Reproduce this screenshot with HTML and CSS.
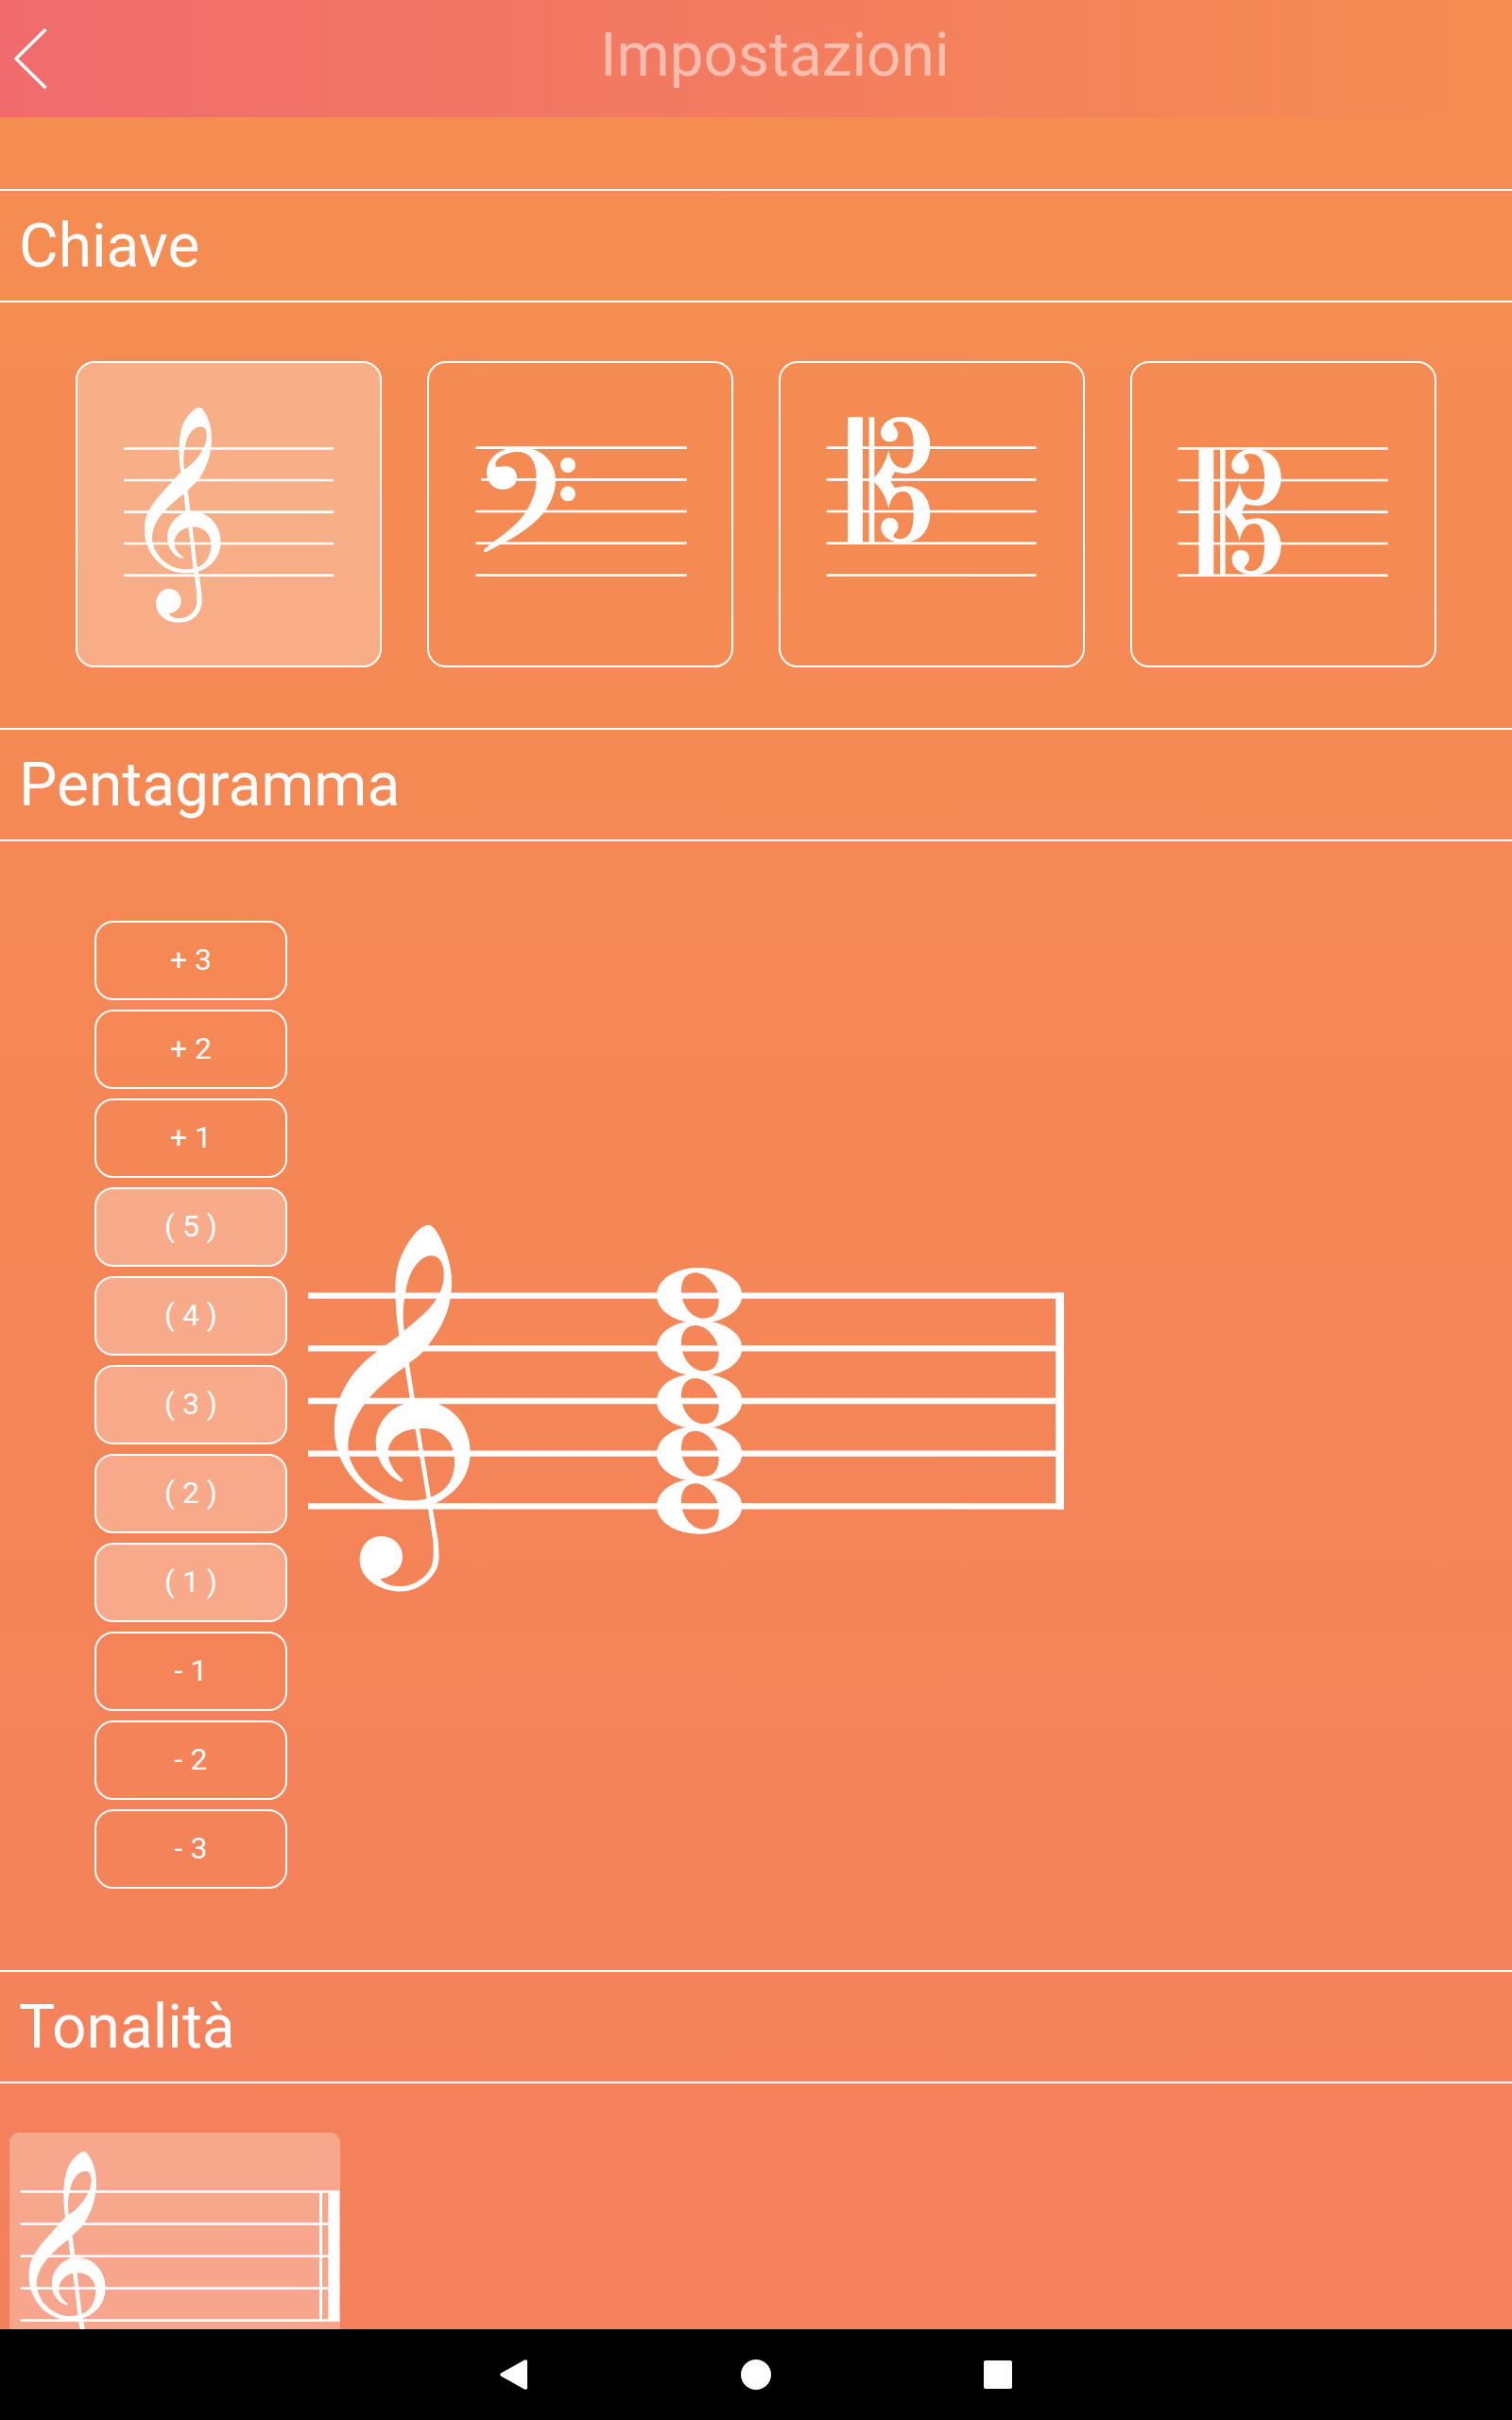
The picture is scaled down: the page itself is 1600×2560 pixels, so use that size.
FILE: index.html
```html
<!DOCTYPE html>
<html lang="it">

<head>
    <title>Impostazioni</title>
    <meta charset="UTF-8">
    <meta name="viewport" content="width=device-width, initial-scale=1">
    <link rel="stylesheet" href="styles.css">
</head>

<body>
    <!-- shared music glyphs -->
    <svg class="defs" width="0" height="0">
        <symbol id="treble" viewBox="101 48 432 1163" preserveAspectRatio="none">
            <path fill-rule="evenodd" d="M307,398 C299,350 295,300 295,250 C295,200 303,165 322,128 C345,85 375,48 400,48 C415,48 425,65 438,90 C460,135 474,180 474,230 C474,310 445,370 400,428 C385,450 365,468 338,486 L322,500 C285,525 245,560 212,596 C170,650 145,700 145,750 C145,790 165,830 200,865 C245,905 290,922 340,922 C370,922 395,918 415,908 C455,890 482,860 483,800 C483,735 445,693 385,693 C315,692 272,725 272,770 C272,800 290,830 320,856 L314,863 C270,845 233,795 233,738 C233,670 290,606 375,606 C470,606 533,680 533,770 C533,850 480,905 415,934 C390,942 365,945 342,944 C315,944 290,942 265,932 C180,890 101,810 101,690 C101,600 150,520 210,470 C240,445 270,425 307,398 Z M323,383 C317,335 320,295 328,262 C335,200 370,145 410,145 C435,145 449,170 449,205 C449,280 390,330 323,383 Z"/>
            <path d="M324,490 L338,484 L356,596 L372,693 L408,912 L414,950 L430,1045 C434,1085 436,1110 428,1135 C405,1185 355,1211 310,1211 C245,1208 183,1170 182,1112 C182,1065 212,1035 250,1035 C290,1035 318,1065 318,1100 C318,1140 285,1165 247,1170 C260,1187 280,1194 310,1194 C355,1194 395,1165 410,1130 C418,1105 416,1080 415,1050 L399,950 L394,912 L358,693 L341,596 Z"/>
        </symbol>
        <!-- heavier cut of the treble clef for small sizes -->
        <symbol id="treble-small" viewBox="248 183 243 683" preserveAspectRatio="none">
            <path fill-rule="evenodd" d="M364,388 C359,355 358,330 359,300 C361,260 370,228 388,208 C403,190 416,183 424,183 C432,183 440,198 448,213 C458,233 462,258 462,285 C461,330 448,370 423,408 C413,422 400,432 386,446 L373,458 C350,474 330,492 315,509 C290,535 272,565 273,600 C275,625 288,652 312,672 C334,689 357,697 380,697 C398,697 412,692 424,687 C446,675 459,650 460,620 C460,585 438,562 402,562 C368,563 345,585 343,612 C343,628 352,645 371,657 L371,663 C343,658 321,630 321,596 C321,555 355,514 400,514 C455,514 491,560 491,608 C491,655 460,690 421,703 C408,708 395,709 378,709 C350,709 325,700 305,685 C270,660 248,615 248,568 C248,525 270,492 300,458 C325,432 345,408 364,388 Z M375,380 C371,350 372,325 378,310 C382,270 405,244 427,244 C440,244 446,255 446,272 C446,315 405,362 375,380 Z"/>
            <path d="M373,455 L386,446 L395,514 L401,562 L416,690 L422,716 C428,750 431,775 431,800 C428,840 400,866 357,866 C318,866 286,840 285,806 C285,780 303,758 326,758 C350,758 366,778 365,801 C363,820 348,835 326,837 C333,848 345,852 357,852 C390,851 413,830 415,800 C416,770 411,740 405,710 L403,690 L388,562 L379,508 Z"/>
        </symbol>
        <symbol id="cclef" viewBox="261 212 263 403">
            <path d="M264,213 H306 Q309,213 309,216 V614 H261 V216 Q261,213 264,213 Z M332,213 H343 Q346,213 346,216 V614 H329 V216 Q329,213 332,213 Z"/>
            <path d="M411,387 C425,390 435,393 447,393 C495,393 523,350 523,303 C523,250 490,213 435,212 C395,212 367,235 366,265 C367,282 380,292 395,292 C412,292 421,280 421,266 C421,255 410,245 406,238 C405,230 412,228 428,228 C458,228 470,255 470,303 C471,350 460,375 437,375 C410,375 396,350 391,318 C385,345 370,380 346,404 V421 C372,445 387,480 391,506 C396,475 410,449 437,449 C460,449 470,475 470,520 C470,570 458,600 428,600 C412,600 405,595 407,587 C412,580 422,572 422,560 C422,543 410,533 394,533 C380,533 367,545 367,563 C367,590 395,612 435,612 C490,612 523,575 523,515 C520,470 490,433 447,433 C435,433 425,436 411,438 L399,420 Q398,412 401,404 Z"/>
        </symbol>
        <symbol id="note" viewBox="105 62 271 178">
            <path fill-rule="evenodd" d="M105,151 C105,100 165,63 238,63 C312,63 376,100 376,151 C376,202 312,239 240,239 C165,239 105,202 105,151 Z M183,140 C181,102 198,79 229,79 C264,79 302,124 302,165 C302,202 287,224 253,224 C212,222 185,180 183,140 Z"/>
        </symbol>
    </svg>

    <div class="header">
        <svg class="back" width="50" height="124" viewBox="0 0 50 124">
            <path d="M48.5,31 L17,62 L48.5,93"/>
        </svg>
        <div class="title">Impostazioni</div>
    </div>

    <div class="content">
        <h2>Chiave</h2>
        <div class="clefs">
            <div class="clef on">
                <svg viewBox="36 42 960 960">
                    <path class="line" d="M183,313H850 M183,414H850 M183,515H850 M183,615H850 M183,716H850"/>
                    <use href="#treble-small" x="248" y="183" width="243" height="683"/>
                </svg>
            </div>
            <div class="clef">
                <svg viewBox="42 42 960 960">
                    <path class="line" d="M190,311H860 M208,412H860 M190,513H860 M190,614H860 M190,715H860"/>
                    <path d="M216,636 C220,630 235,618 250,607 C300,572 330,545 350,514 C372,475 383,445 383,410 C383,355 365,324 322,324 C285,324 252,345 253,366 C256,376 268,370 285,369 C308,370 321,385 321,405 C321,428 302,443 276,443 C245,443 225,420 225,390 C225,345 265,310 325,308 C400,308 444,355 444,415 C444,450 430,480 414,507 C380,550 340,580 290,607 L222,643 Q215,643 216,636 Z"/>
                    <circle cx="483" cy="366" r="24"/>
                    <circle cx="483" cy="457" r="24"/>
                </svg>
            </div>
            <div class="clef">
                <svg viewBox="48 42 960 960">
                    <path class="line" d="M194,311H860 M194,412H860 M194,513H860 M194,614H860 M194,715H860"/>
                    <use href="#cclef" x="261" y="212" width="263" height="403"/>
                </svg>
            </div>
            <div class="clef">
                <svg viewBox="54 42 960 960">
                    <path class="line" d="M199,313H866 M199,414H866 M199,515H866 M199,615H866 M199,716H866"/>
                    <use href="#cclef" x="265" y="314" width="263" height="403"/>
                </svg>
            </div>
        </div>

        <h2>Pentagramma</h2>
        <div class="staff">
            <div class="levels">
                <div class="level">+ 3</div>
                <div class="level">+ 2</div>
                <div class="level">+ 1</div>
                <div class="level on">( 5 )</div>
                <div class="level on">( 4 )</div>
                <div class="level on">( 3 )</div>
                <div class="level on">( 2 )</div>
                <div class="level on">( 1 )</div>
                <div class="level">- 1</div>
                <div class="level">- 2</div>
                <div class="level">- 3</div>
            </div>
            <svg width="800" height="1024" viewBox="18 -918 2400 3072">
                <path class="line thick" d="M18,272H2418 M18,439H2418 M18,606H2418 M18,773H2418 M18,940H2418"/>
                <rect x="2391" y="262" width="27" height="688"/>
                <use href="#treble" x="101" y="48" width="432" height="1163"/>
                <use href="#note" x="1125" y="182" width="271" height="178"/>
                <use href="#note" x="1125" y="349" width="271" height="178"/>
                <use href="#note" x="1125" y="517" width="271" height="178"/>
                <use href="#note" x="1125" y="684" width="271" height="178"/>
                <use href="#note" x="1125" y="851" width="271" height="178"/>
            </svg>
        </div>

        <h2>Tonalità</h2>
        <div class="key">
            <svg width="350" height="350" viewBox="30 588 1050 1050">
                <path class="line" d="M65,775H1078 M65,878H1078 M65,980H1078 M65,1082H1078 M65,1184H1078"/>
                <rect x="1014" y="772" width="9" height="416"/>
                <rect x="1042" y="772" width="36" height="416"/>
                <use href="#treble-small" x="91" y="648" width="244" height="694"/>
            </svg>
        </div>
    </div>

    <!-- android buttons -->
    <div class="nav">
        <div class="button">
            <svg width="32" height="32" viewBox="0 0 32 32">
                <path d="M2,14.5 L27,0.5 Q30,-0.5 30,2 V30 Q30,32.5 27,31.5 L2,17.5 Q0.5,16 2,14.5 Z"/>
            </svg>
        </div>
        <div class="button"><div class="home"></div></div>
        <div class="button"><div class="recent"></div></div>
    </div>
</body>

</html>
```
FILE: styles.css
```css
* {
    margin: 0px;
    padding: 0px;
    box-sizing: border-box;
}

body {
    display: flex;
    flex-direction: column;
    height: 2560px;
    overflow: hidden;
    background: #000;
    color: #fff;
    font-family: Roboto, "Liberation Sans", sans-serif;
}

svg {
    display: block;
    fill: #fff;
}

.defs {
    position: absolute;
}

.line {
    stroke: #fff;
    stroke-width: 8;
}

.thick {
    stroke-width: 19;
}

.header {
    display: flex;
    flex: none;
    height: 124px;
    background: linear-gradient(to right, #f16b6e, #f58d51);
}

.back {
    flex: none;
}

.back path {
    fill: none;
    stroke: #fff;
    stroke-width: 3.5;
}

.title {
    flex: 1;
    padding-left: 585px;
    font-size: 64px;
    line-height: 118px;
    color: rgba(255, 255, 255, 0.5);
}

.content {
    flex: 1;
    min-height: 0;
    padding-top: 76px;
    overflow: hidden;
    background: linear-gradient(to bottom, #f58d51, #f4805c);
}

h2 {
    height: 120px;
    padding-left: 20px;
    border-top: 2px solid #fff;
    border-bottom: 2px solid #fff;
    font-size: 64px;
    font-weight: 400;
    line-height: 118px;
}

.clefs {
    display: flex;
    gap: 48px;
    padding: 62px 80px 64px;
}

.clef {
    width: 324px;
    height: 324px;
    border: 2px solid #fff;
    border-radius: 20px;
}

.on {
    background: rgba(255, 255, 255, 0.3);
}

.staff {
    display: flex;
    gap: 22px;
    padding: 84px 100px 86px;
}

.levels {
    display: flex;
    flex-direction: column;
    gap: 10px;
}

.level {
    width: 204px;
    height: 84px;
    border: 2px solid #fff;
    border-radius: 20px;
    font-size: 32px;
    line-height: 78px;
    text-align: center;
}

.key {
    width: 350px;
    height: 350px;
    margin: 52px 10px;
    border-radius: 10px;
    background: rgba(255, 255, 255, 0.3);
}

.nav {
    display: flex;
    flex: none;
    justify-content: center;
    height: 96px;
}

.button {
    display: flex;
    align-items: center;
    justify-content: center;
    width: 256px;
}

.home {
    width: 32px;
    height: 32px;
    border-radius: 50%;
    background: #fff;
}

.recent {
    width: 30px;
    height: 30px;
    border-radius: 2px;
    background: #fff;
}
```
